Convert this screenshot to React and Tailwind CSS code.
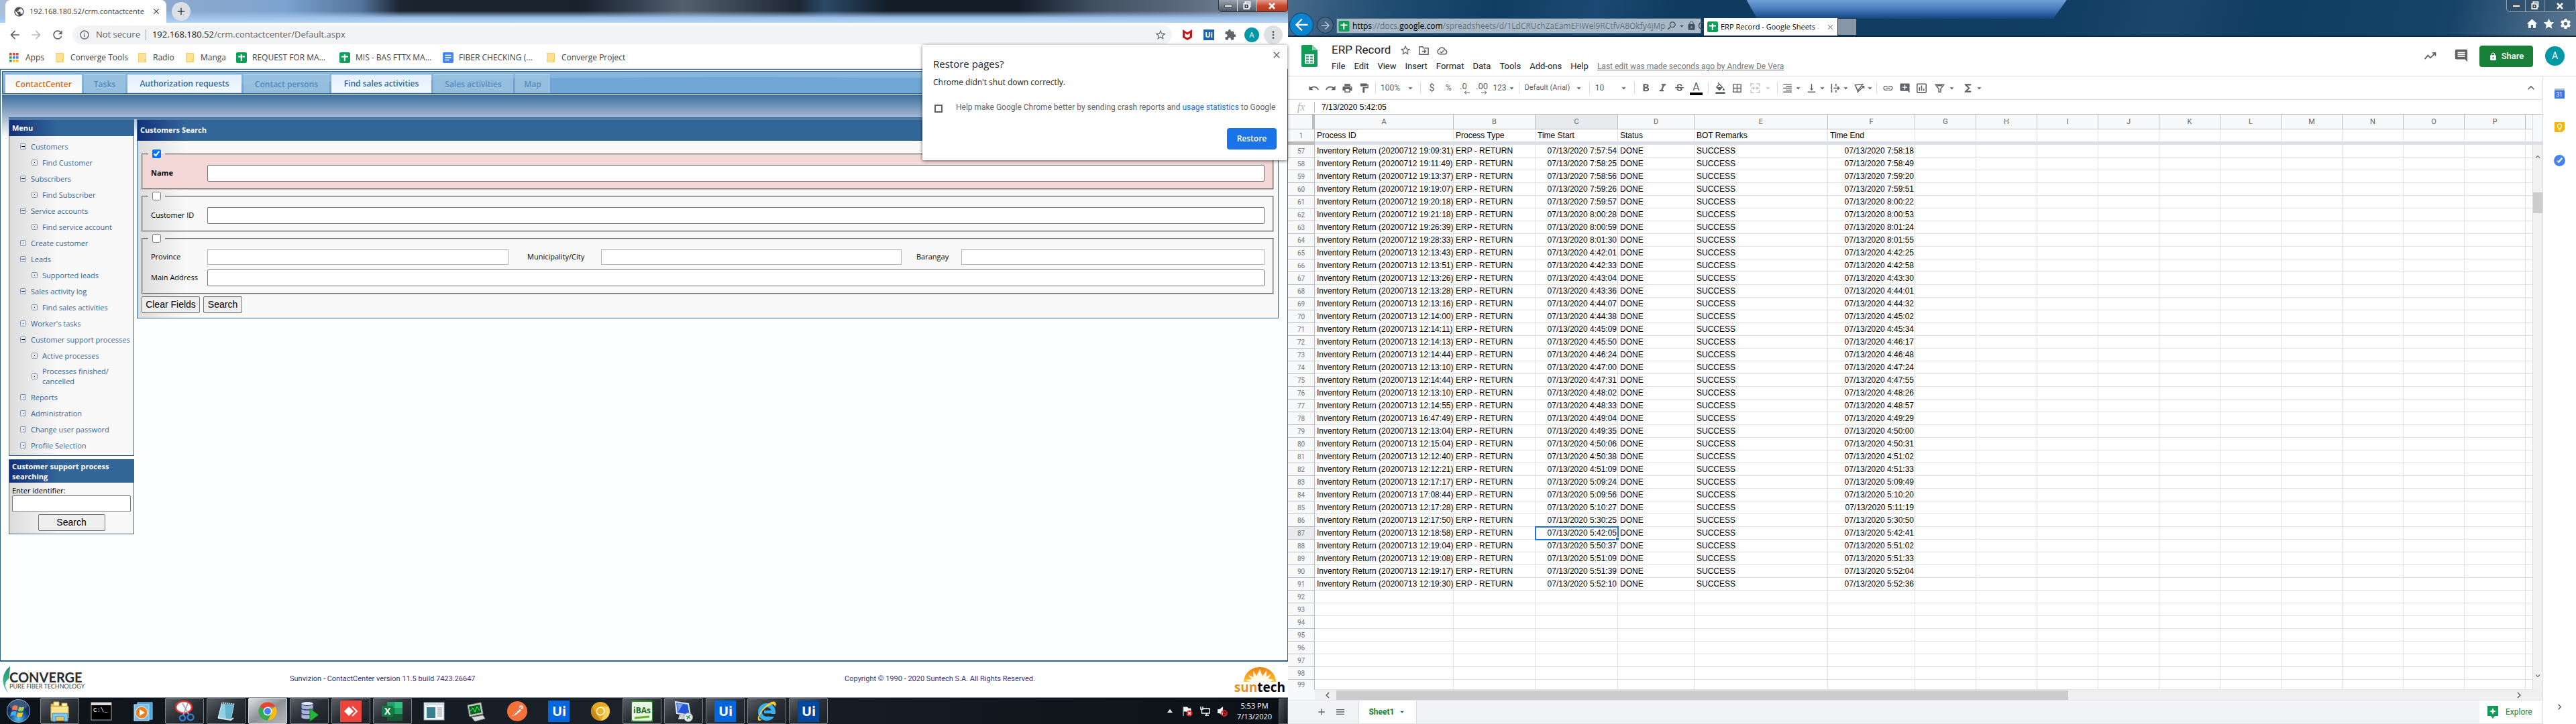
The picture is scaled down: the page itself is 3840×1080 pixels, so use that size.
import React from "react";
import {
  MdArrowBack, MdArrowForward, MdRefresh, MdInfoOutline, MdPublic, MdClose, MdAdd, MdStarBorder, MdMoreVert,
  MdExtension, MdUndo, MdRedo, MdPrint, MdFormatPaint, MdFormatBold, MdFormatItalic, MdStrikethroughS,
  MdFormatColorFill, MdBorderAll, MdFormatAlignRight, MdVerticalAlignBottom, MdLink, MdAddComment,
  MdInsertChartOutlined, MdFunctions, MdArrowDropDown, MdLock, MdSearch, MdHome, MdStar, MdSettings, MdMenu,
  MdComment, MdKeyboardArrowUp, MdKeyboardArrowDown, MdKeyboardArrowLeft, MdKeyboardArrowRight,
} from "react-icons/md";

const cx = (...parts) => parts.filter(Boolean).join(" ");

/* ---------- shared pieces ---------- */

function WindowButtons({ dark }) {
  const base = "flex h-full items-center justify-center";
  return (
    <div
      className={cx(
        "flex h-[18px] w-[104px] shrink-0 overflow-hidden rounded-b-[5px] border border-t-0",
        dark ? "border-[#8fa3b5] bg-[#2c4a66]/60" : "border-[#2b3340] bg-[#7f8b99]"
      )}
    >
      <button aria-label="Minimize" className={cx(base, "w-[28px] border-r", dark ? "border-[#8fa3b5]" : "border-[#d5dbe2] bg-linear-to-b from-[#9aa5b1] to-[#4c5866]")}>
        <span className="h-[4px] w-[12px] border border-[#444] bg-white" />
      </button>
      <button aria-label="Restore window" className={cx(base, "w-[28px] border-r", dark ? "border-[#8fa3b5]" : "border-[#d5dbe2] bg-linear-to-b from-[#9aa5b1] to-[#4c5866]")}>
        <svg viewBox="0 0 14 14" className="h-[13px] w-[14px]">
          <rect x="4" y="1" width="8" height="8" fill="none" stroke="#fff" strokeWidth="1.6" />
          <rect x="2" y="4" width="8" height="8" fill="#445" stroke="#fff" strokeWidth="2" />
          <rect x="5" y="7" width="2" height="2" fill="#fff" />
        </svg>
      </button>
      <button aria-label="Close window" className={cx(base, "flex-1", !dark && "bg-linear-to-b from-[#e29b8c] via-[#c8492f] to-[#b03a20]")}>
        <svg viewBox="0 0 12 10" className="h-[10px] w-[12px]">
          <path d="M2 1l8 8M10 1L2 9" stroke="#fff" strokeWidth="2.6" />
        </svg>
      </button>
    </div>
  );
}

function SheetsMark({ className }) {
  return (
    <svg viewBox="0 0 16 16" className={className}>
      <rect width="16" height="16" rx="2" fill="#0f9d58" />
      <path d="M7.8 3v10M3 6.6h10" stroke="#fff" strokeWidth="2" />
    </svg>
  );
}

function Folder() {
  return (
    <svg viewBox="0 0 12 14" className="h-[14px] w-[12px] shrink-0">
      <path d="M0.5 0.5h11v13h-11z" fill="#fde293" stroke="#f3cd62" />
      <path d="M9 9h3v5H9z" fill="#f7d36b" />
    </svg>
  );
}

/* ---------- Chrome window ---------- */

function ChromeTitleBar() {
  return (
    <div className="flex h-[34px] items-start bg-[linear-gradient(180deg,transparent_0,transparent_48%,#9fc3ea_78%,#b4d3f5_100%),linear-gradient(90deg,#a9bfd9_0,#8ba9cd_14%,#7ea3d0_22%,#52749d_28%,#1b2530_31%,#18212c_45%,#3a4656_50%,#55606e_53%,#1c2733_62%,#2c4a66_64%,#131c27_69%,#141d28_79%,#414f61_85%,#5b6a7d_92%,#8795a8_100%)] pl-[8px]">
      <div className="flex h-[34px] w-[240px] items-center rounded-t-lg bg-white pr-[8px] pl-[12px]">
        <MdPublic className="h-[17px] w-[17px] shrink-0 text-[#4d5156]" />
        <span className="ml-[7px] flex-1 text-[11px] leading-4 whitespace-nowrap text-[#3c4043]">192.168.180.52/crm.contactcente</span>
        <button aria-label="Close tab"><MdClose className="h-[14px] w-[14px] text-[#3c4043]" /></button>
      </div>
      <button aria-label="New tab" className="mt-[3px] ml-[8px] flex h-[28px] w-[28px] items-center justify-center rounded-full bg-[#dbe0e6]">
        <MdAdd className="h-[18px] w-[18px] text-[#3c4043]" />
      </button>
      <div className="flex-1" />
      <WindowButtons />
    </div>
  );
}

function ChromeToolbar() {
  return (
    <div className="flex h-[36px] items-center bg-white pr-[8px] pl-[12px] text-[#5f6368]">
      <button aria-label="Back"><MdArrowBack className="h-[20px] w-[20px]" /></button>
      <button aria-label="Forward" className="ml-[12px]"><MdArrowForward className="h-[20px] w-[20px] text-[#bbbdc0]" /></button>
      <button aria-label="Reload" className="ml-[12px]"><MdRefresh className="h-[20px] w-[20px]" /></button>
      <div className="ml-[12px] flex h-[28px] flex-1 items-center rounded-full bg-[#f1f3f4] pr-[8px] pl-[10px] text-[13px]">
        <MdInfoOutline className="h-[16px] w-[16px]" />
        <span className="ml-[9px]">Not secure</span>
        <span className="ml-[8px] h-[16px] w-px bg-[#9aa0a6]" />
        <span className="ml-[9px] text-[#202124]">192.168.180.52</span>
        <span className="flex-1">/crm.contactcenter/Default.aspx</span>
        <button aria-label="Bookmark this page"><MdStarBorder className="h-[18px] w-[18px]" /></button>
      </div>
      <svg viewBox="0 0 14 16" className="ml-[16px] h-[16px] w-[14px]">
        <path d="M0 0l7 4.5L14 0v12l-7 4-7-4z" fill="#c01818" />
        <path d="M3.3 5.2L7 8l3.7-2.8v5.4L7 12.6l-3.7-2z" fill="#fff" />
      </svg>
      <span className="ml-[17px] flex h-[16px] w-[16px] items-center justify-center bg-[#1f63a8] text-[11px] font-bold text-white">Ui</span>
      <button aria-label="Extensions" className="ml-[15px]"><MdExtension className="h-[18px] w-[18px]" /></button>
      <button aria-label="Profile" className="ml-[12px] flex h-[22px] w-[22px] items-center justify-center rounded-full bg-[#0097a7] text-[11px] text-white">A</button>
      <button aria-label="Chrome menu" className="ml-[7px] flex h-[28px] w-[28px] items-center justify-center rounded-full bg-[#dfe0e1]">
        <MdMoreVert className="h-[18px] w-[18px]" />
      </button>
    </div>
  );
}

function AppsGlyph() {
  const colors = ["#ea4335", "#ea4335", "#ea4335", "#34a853", "#4285f4", "#4285f4", "#34a853", "#fbbc04", "#fbbc04"];
  return (
    <svg viewBox="0 0 14 14" className="h-[14px] w-[14px] shrink-0">
      {colors.map((c, i) => <rect key={i} x={(i % 3) * 5} y={Math.floor(i / 3) * 5} width="3.6" height="3.6" fill={c} />)}
    </svg>
  );
}

function DocsMark() {
  return (
    <svg viewBox="0 0 16 16" className="h-[16px] w-[16px] shrink-0">
      <rect width="16" height="16" rx="2" fill="#4285f4" />
      <path d="M3.5 4.5h9M3.5 8h9M3.5 11.5h6" stroke="#fff" strokeWidth="1.6" />
    </svg>
  );
}

const bookmarks = [
  ["Apps", "apps", "w-[69px]"],
  ["Converge Tools", "folder", "w-[123px]"],
  ["Radio", "folder", "w-[71px]"],
  ["Manga", "folder", "w-[75px]"],
  ["REQUEST FOR MA...", "sheet", "w-[154px]"],
  ["MIS - BAS FTTX MA...", "sheet", "w-[154px]"],
  ["FIBER CHECKING (...", "doc", "w-[155px]"],
  ["Converge Project", "folder", "w-[140px]"],
];

function BookmarksBar() {
  return (
    <nav className="flex h-[33px] items-center border-b border-[#dadce0] bg-white pl-[14px] text-[12px] text-[#3c4043]">
      {bookmarks.map(([label, kind, w]) => (
        <a key={label} href="#bookmark" className={cx("flex shrink-0 items-center whitespace-nowrap", kind === "sheet" || kind === "doc" ? "gap-[8px]" : "gap-[10px]", w)}>
          {kind === "apps" && <AppsGlyph />}
          {kind === "folder" && <Folder />}
          {kind === "sheet" && <SheetsMark className="h-[16px] w-[16px] shrink-0" />}
          {kind === "doc" && <DocsMark />}
          {label}
        </a>
      ))}
    </nav>
  );
}

function RestorePopup() {
  return (
    <div role="dialog" aria-label="Restore pages?" className="absolute top-[67px] right-px z-10 flex h-[172px] w-[544px] flex-col rounded-xs bg-white px-[16px] shadow-[0_1px_5px_rgba(0,0,0,0.6)]">
      <div className="flex h-[40px] items-start justify-between pt-[18px] text-[15px] leading-5 text-[#202124]">
        Restore pages?
        <button aria-label="Close" className="-mt-[11px] -mr-[8px]"><MdClose className="h-[16px] w-[16px] text-[#5f6368]" /></button>
      </div>
      <p className="mt-[8px] text-[12px] leading-4 text-[#202124]">Chrome didn't shut down correctly.</p>
      <label className="mt-[21px] flex items-center font-[Roboto] text-[12px] leading-4 whitespace-nowrap text-[#5f6368]">
        <input type="checkbox" className="mt-[4px] mr-[20px] ml-[2px] h-[12px] w-[12px] shrink-0 appearance-none border-2 border-[#5f6368] bg-white" />
        <span>Help make Google Chrome better by sending crash reports and <a href="#stats" className="text-[#1a73e8]">usage statistics</a> to Google</span>
      </label>
      <button className="mt-[23px] h-[32px] w-[74px] shrink-0 self-end rounded bg-[#1a73e8] text-[12px] font-semibold text-white">Restore</button>
    </div>
  );
}

/* ---------- ContactCenter page ---------- */

const tabs = [
  ["ContactCenter", "active", "w-[114px]"],
  ["Tasks", "off", "w-[62px]"],
  ["Authorization requests", "on", "w-[170px]"],
  ["Contact persons", "off", "w-[128px]"],
  ["Find sales activities", "on", "w-[149px]"],
  ["Sales activities", "off", "w-[119px]"],
  ["Map", "off", "w-[52px]"],
];

const tabLook = {
  active: "bg-linear-to-b from-[#f0f5fa] to-white text-[#d96a10]",
  on: "bg-linear-to-b from-[#e3effb] to-[#f1f8ff] text-[#2f6799] border-b-2 border-b-[#dbe8f4]",
  off: "bg-[#9dc3e0]/80 text-[#558ebd]",
};

const menu = [
  ["Customers", 0, 1], ["Find Customer", 1], ["Subscribers", 0, 1], ["Find Subscriber", 1], ["Service accounts", 0, 1],
  ["Find service account", 1], ["Create customer", 0], ["Leads", 0, 1], ["Supported leads", 1], ["Sales activity log", 0, 1],
  ["Find sales activities", 1], ["Worker's tasks", 0], ["Customer support processes", 0, 1], ["Active processes", 1],
  ["Processes finished/ cancelled", 1], ["Reports", 0], ["Administration", 0], ["Change user password", 0], ["Profile Selection", 0],
];

function Node({ open }) {
  return (
    <svg viewBox="0 0 9 9" className="h-[9px] w-[9px] shrink-0">
      <rect x="0.5" y="0.5" width="8" height="8" rx="1" fill="#e4eaf0" stroke="#7f95ab" />
      {open ? <path d="M2 4.5h5" stroke="#000" /> : <rect x="4" y="4" width="1" height="1" fill="#000" />}
    </svg>
  );
}

const headerFill = "bg-[linear-gradient(90deg,#12307a_0,#336699_72px)] bg-[#336699] font-bold text-white";
const bodyFill = "bg-[linear-gradient(90deg,#dcdcdc_0,#f9f9f9_72px)]";
const textBox = "rounded-xs border border-[#767676] bg-white";

function SideMenu() {
  return (
    <aside className="flex w-[187px] shrink-0 flex-col gap-[5px] text-[11px]">
      <section className={cx("border border-[#336699]", bodyFill)}>
        <h2 className={cx("flex h-[24px] items-center px-[4px]", headerFill)}>Menu</h2>
        <ul className="pt-[3px] pb-[3px] leading-[15px] text-[#336699]">
          {menu.map(([label, depth, open]) => (
            <li key={label} className={cx("flex items-center gap-[7px]", depth ? "pl-[33px]" : "pl-[16px]", label.length === 29 ? "h-[38px]" : "h-[24px]")}>
              <Node open={open} />
              <a href="#menu" className={label.length === 29 ? "w-[110px]" : "whitespace-nowrap"}>{label}</a>
            </li>
          ))}
        </ul>
      </section>
      <section className={cx("border border-[#336699]", bodyFill)}>
        <h2 className={cx("px-[4px] py-[2px] leading-[15px]", headerFill)}>Customer support process searching</h2>
        <div className="flex flex-col items-center px-[4px] pt-[4px] pb-[4px]">
          <label htmlFor="ident" className="self-start leading-[15px] text-black">Enter identifier:</label>
          <input id="ident" className={cx("h-[25px] w-full", textBox)} />
          <button className="mt-[3px] h-[25px] w-[100px] rounded-xs border border-[#767676] bg-[#efefef] font-[Liberation_Sans] text-[14px] text-black">Search</button>
        </div>
      </section>
    </aside>
  );
}

const fieldset = "min-w-0 border-2 border-[#c0c0c0] [border-style:groove] px-[12px] py-[10px]";
const legend = "ml-[-4px] flex px-[6px]";

function Field({ id, label, bold, light, labelWidth = "w-[84px]" }) {
  return (
    <div className="flex min-w-0 flex-1 items-center">
      <label htmlFor={id} className={cx("shrink-0", bold && "font-bold", labelWidth)}>{label}</label>
      <input id={id} className={cx("min-w-0 flex-1", light ? "h-[23px] border border-[#b5b5b5] bg-white" : cx("h-[25px]", textBox))} />
    </div>
  );
}

function SearchForm() {
  return (
    <section className={cx("min-w-0 flex-1 self-start border border-[#336699] text-[11px] text-black", bodyFill)}>
      <h2 className={cx("flex h-[31px] items-center px-[4px]", headerFill)}>Customers Search</h2>
      <form className="flex flex-col gap-[3px] px-[6px] pt-[13px] pb-[7px]" onSubmit={(e) => e.preventDefault()}>
        <fieldset className={cx(fieldset, "bg-[#f4d7d7]")}>
          <legend className={legend}><input type="checkbox" defaultChecked aria-label="Search by name" className="h-[13px] w-[13px]" /></legend>
          <Field id="name" label="Name" bold />
        </fieldset>
        <fieldset className={fieldset}>
          <legend className={legend}><input type="checkbox" aria-label="Search by customer ID" className="h-[13px] w-[13px]" /></legend>
          <Field id="cid" label="Customer ID" />
        </fieldset>
        <fieldset className={fieldset}>
          <legend className={legend}><input type="checkbox" aria-label="Search by address" className="h-[13px] w-[13px]" /></legend>
          <div className="flex flex-col gap-[7px]">
            <div className="flex gap-[28px]">
              <div className="flex w-[533px]"><Field id="prov" label="Province" light /></div>
              <div className="flex w-[558px]"><Field id="mun" label="Municipality/City" light labelWidth="w-[110px]" /></div>
              <div className="-ml-[6px] flex flex-1"><Field id="bar" label="Barangay" light labelWidth="w-[67px]" /></div>
            </div>
            <Field id="addr" label="Main Address" />
          </div>
        </fieldset>
        <div className="flex gap-[5px] font-[Liberation_Sans] text-[14px]">
          <button className="h-[25px] w-[87px] rounded-xs border border-[#767676] bg-[#efefef]">Clear Fields</button>
          <button className="h-[25px] w-[58px] rounded-xs border border-[#767676] bg-[#efefef]">Search</button>
        </div>
      </form>
    </section>
  );
}

function ContactCenter() {
  return (
    <main className="flex flex-1 flex-col border border-b-2 border-[#2f6496] bg-[#fdfffe] px-[2px] pt-[2px]">
      <nav className="flex h-[34px] items-end gap-[3px] border-y border-l border-[#2f6496] bg-[radial-gradient(ellipse_900px_24px_at_1100px_32px,#6fa6d5_0,#6fa6d5_98%,transparent_100%),linear-gradient(180deg,#8bb8dc,#78add8)] pl-[4px] text-[12px] font-semibold">
        {tabs.map(([label, look, w]) => (
          <button key={label} className={cx("h-[28px] shrink-0 border-t border-[#c5dcef] whitespace-nowrap", tabLook[look], w)}>{label}</button>
        ))}
      </nav>
      <div className="mt-px flex-1 bg-[linear-gradient(180deg,#3c6e9f_0,#a5b9d2_34px,#fdfffe_64px)] bg-no-repeat pr-[11px] pl-[10px]">
        <div className="h-[36px] border-b-2 border-[#2f6496]" />
        <div className="flex gap-[4px] pt-[1px]">
          <SideMenu />
          <SearchForm />
        </div>
      </div>
    </main>
  );
}

function SiteFooter() {
  return (
    <footer className="flex h-[53px] items-center bg-white font-[Roboto] text-[11px] text-[#3a2f7d]">
      <div className="flex w-[432px] items-center">
        <svg viewBox="0 0 16 48" className="ml-[2px] h-[46px] w-[14px]">
          <defs>
            <linearGradient id="leaf" x1="0" y1="0" x2="0" y2="1"><stop offset="0" stopColor="#1e8f72" /><stop offset="1" stopColor="#4cd0a4" /></linearGradient>
          </defs>
          <path d="M15 1C5 8-5 27 12 47 5 35 5 28 13 22z" fill="url(#leaf)" />
        </svg>
        <div className="-ml-[2px] pt-[3px] font-[Lato] text-[#2b2b2b]">
          <div className="text-[20px] leading-[18px] font-bold">CONVERGE</div>
          <div className="text-[9px] leading-[10px] text-[#444]">PURE FIBER TECHNOLOGY</div>
        </div>
      </div>
      <span>Sunvizion - ContactCenter version 11.5 build 7423.26647</span>
      <span className="mr-[297px] ml-auto">Copyright © 1990 - 2020 Suntech S.A. All Rights Reserved.</span>
      <div className="mr-[4px] flex flex-col items-center">
        <svg viewBox="0 0 52 24" className="h-[23px] w-[52px]">
          <defs>
            <linearGradient id="sun" x1="0" y1="0" x2="0" y2="1"><stop offset="0" stopColor="#f07d10" /><stop offset="1" stopColor="#fcc32d" /></linearGradient>
          </defs>
          <path d="M1 24a25 23 0 0 1 50 0z" fill="url(#sun)" />
          <path d="M10 24l-6-3 9-1-5-7 8 4 0-10 5 8 5-11 4 11 7-9-1 10 8-4-5 7 9 2-6 3z" fill="#fff" opacity="0.9" />
        </svg>
        <span className="font-[Open_Sans] text-[19px] leading-[17px] font-bold text-black"><span className="text-[#f08c1c]">sun</span>tech</span>
      </div>
    </footer>
  );
}

/* ---------- Windows taskbar ---------- */

const art = {
  explorer: (
    <>
      <path d="M3 5h10l2 3h13v22H3z" fill="#e9c860" stroke="#b99530" />
      <path d="M7 2h8v6H7zM19 4h8v5h-8z" fill="#fff4c0" stroke="#d9a83a" />
      <path d="M3 9h26v17H3z" fill="#fbe592" stroke="#d4ae45" />
      <path d="M5 19h23v12h-5v-7H10v7H5z" fill="#7cc4ea" stroke="#3f8fc0" />
    </>
  ),
  cmd: (
    <>
      <rect x="1" y="3" width="30" height="26" fill="#000" stroke="#aaa" />
      <rect x="1" y="3" width="30" height="4" fill="#ddd" />
      <text x="4" y="17" fontSize="9" fill="#fff" fontFamily="Liberation Mono">C:\_</text>
    </>
  ),
  media: (
    <>
      <rect x="8" y="3" width="22" height="25" fill="#4aa3da" stroke="#9cd2f4" />
      <rect x="3" y="6" width="22" height="24" fill="#77bce6" stroke="#c2e4f8" />
      <circle cx="14" cy="18" r="9" fill="#ef7d1a" stroke="#fff" />
      <path d="M11 13v10l8-5z" fill="#fff" />
    </>
  ),
  snip: (
    <>
      <ellipse cx="15" cy="10" rx="12" ry="9" fill="#fff" stroke="#d33" strokeWidth="2.5" />
      <path d="M13 4l10 18M21 4l-7 18" stroke="#aab" strokeWidth="2" />
      <circle cx="25" cy="25" r="4.5" fill="none" stroke="#2f7fd0" strokeWidth="2.5" />
      <circle cx="13" cy="26" r="4" fill="none" stroke="#2f7fd0" strokeWidth="2.5" />
    </>
  ),
  notepad: (
    <>
      <path d="M10 3l18 2-5 24-19-3z" fill="#8fd0e6" stroke="#e9f6fa" />
      <path d="M14 5l14 1-5 23-7-1z" fill="#4d9fbc" opacity=".6" />
      <path d="M4 26l19 3 4-3" stroke="#d6e8ee" strokeWidth="2" fill="none" />
      <path d="M10 4l18 1" stroke="#555" strokeWidth="2" strokeDasharray="1.5 1.5" />
    </>
  ),
  chrome: (
    <>
      <path d="M16 16L4.3 9.2A13.5 13.5 0 0 1 27.7 9.2H16z" fill="#ea4335" />
      <path d="M16 16L27.7 9.2A13.5 13.5 0 0 1 16 29.5l5.5-10z" fill="#fbbc04" />
      <path d="M16 16l-11.7-6.8A13.5 13.5 0 0 0 16 29.5l5.5-10z" fill="#34a853" />
      <circle cx="16" cy="16" r="6.5" fill="#fff" />
      <circle cx="16" cy="16" r="5" fill="#4285f4" />
    </>
  ),
  db: (
    <>
      <path d="M4 4v21c0 4 18 4 18 0V4z" fill="#aab4d8" stroke="#333b66" />
      <ellipse cx="13" cy="4.5" rx="9" ry="3" fill="#e5e9fa" stroke="#333b66" />
      <path d="M4 11c0 4 18 4 18 0M4 18c0 4 18 4 18 0" stroke="#333b66" strokeWidth="1.5" fill="none" />
      <path d="M17 12l13 9.5L17 31z" fill="#27b43a" stroke="#0a7a1a" />
    </>
  ),
  anydesk: (
    <>
      <rect width="32" height="32" fill="#ef443b" />
      <path d="M13 9l7 7-7 7-7-7z" fill="#fff" />
      <path d="M18 9l7 7-7 7" fill="none" stroke="#fff" strokeWidth="2" />
    </>
  ),
  excel: (
    <>
      <rect x="8" y="2" width="23" height="28" rx="1" fill="#21a366" />
      <path d="M19.500 2H31v9H19.500z" fill="#33c481" />
      <path d="M8 11h11.500v9H8z" fill="#107c41" />
      <path d="M8 20h23v10H8z" fill="#185c37" />
      <rect x="0" y="8" width="17" height="16" rx="1" fill="#107c41" />
      <text x="4" y="21" fontSize="14" fontWeight="700" fill="#fff" fontFamily="Open Sans">X</text>
    </>
  ),
  window: (
    <>
      <rect x="1" y="3" width="30" height="26" fill="#f5f7f8" stroke="#8aa" />
      <rect x="1" y="3" width="30" height="4" fill="#d3dde4" />
      <rect x="5" y="10" width="13" height="16" fill="#3a7f90" />
      <path d="M21 11h7M21 14h7M21 17h7M21 20h7M21 23h7" stroke="#889" />
    </>
  ),
  monitor: (
    <>
      <path d="M4 7l20-4 3 17-20 4z" fill="#ccc" stroke="#888" />
      <path d="M6 9l16-3 2.500 12-16 3z" fill="#062" />
      <path d="M8 16l4-5 3 6 3-8 4 6" stroke="#5f5" fill="none" />
      <path d="M10 25l17-3 3 5-15 4z" fill="#ddd" stroke="#888" />
    </>
  ),
  postman: (
    <>
      <circle cx="16" cy="16" r="15" fill="#f4713b" />
      <path d="M8 23l11-11 3 3-9 7z" fill="#fff" opacity=".9" />
      <circle cx="22" cy="10" r="3" fill="#ffd9c8" />
      <path d="M10 22l12-12" stroke="#a33f17" />
    </>
  ),
  canary: (
    <>
      <circle cx="16" cy="16" r="14" fill="#e5a91d" />
      <path d="M16 9h12A14 14 0 0 1 17 30l5-11z" fill="#f8d35a" />
      <path d="M4 9l6 11 6 10A14 14 0 0 1 4 9z" fill="#c98a14" />
      <circle cx="16" cy="16" r="6.500" fill="#fff" />
      <circle cx="16" cy="16" r="5" fill="#eeb429" />
    </>
  ),
  ibas: (
    <>
      <rect x="0" y="1" width="32" height="30" rx="3" fill="#e9f5e4" stroke="#2f8a2f" strokeWidth="2" />
      <text x="3" y="19" fontSize="12" fontWeight="700" fill="#1c6b23" fontFamily="Open Sans">iBAs</text>
      <path d="M5 26l22-2" stroke="#63b32e" strokeWidth="3" />
    </>
  ),
  remote: (
    <>
      <path d="M4 2l19 3 3 17-20-3z" fill="#2453d8" stroke="#dfe6f5" strokeWidth="2" />
      <path d="M6 4l9 1-7 12z" fill="#7ba1f5" />
      <path d="M10 21l9 1 2 6H8z" fill="#cfd4da" />
      <circle cx="23" cy="25" r="6.500" fill="#e8ecef" stroke="#99a" />
      <path d="M20 23l3 2-2 3M26 22l-3 2 3 3" stroke="#2a9c3a" fill="none" strokeWidth="1.500" />
    </>
  ),
  ie: (
    <>
      <circle cx="16" cy="17" r="10" fill="none" stroke="#35b2ef" strokeWidth="6" />
      <path d="M12 17h17" stroke="#35b2ef" strokeWidth="4.500" />
      <path d="M21 20h10v4H19z" fill="#20262d" />
      <path d="M4 30C-3 24 22-5 29 3c2 2 0 5-1 7 0-4-2-5-5-4C14 9 4 20 5 26c0 2 2 3 4 2-2 2-4 2.500-5 2z" fill="#f7cb35" />
    </>
  ),
  uiBright: (
    <>
      <rect width="32" height="32" fill="#0067df" />
      <text x="6" y="23" fontSize="20" fontWeight="700" fill="#fff" fontFamily="Open Sans">Ui</text>
    </>
  ),
  uiDark: (
    <>
      <rect width="32" height="32" fill="#00489d" />
      <text x="6" y="23" fontSize="20" fontWeight="700" fill="#fff" fontFamily="Open Sans">Ui</text>
    </>
  ),
};

const taskItems = [
  ["explorer", 1], ["cmd"], ["media"], ["snip", 1], ["notepad", 1], ["chrome", 2], ["db", 1], ["anydesk", 1], ["excel", 1],
  ["window"], ["monitor"], ["postman"], ["uiBright"], ["canary"], ["ibas", 1], ["remote", 1], ["uiBright", 1], ["ie", 1], ["uiDark", 1],
];

function Taskbar() {
  return (
    <div className="flex h-[40px] items-stretch border-t border-[#8a94a0] bg-linear-to-r from-[#0c1218] via-[#1b222a] to-[#0b1016]">
      <button aria-label="Start" className="ml-[8px] flex w-[38px] items-center justify-center">
        <svg viewBox="0 0 38 38" className="h-[37px] w-[37px]">
          <defs><radialGradient id="orb" cx=".5" cy=".85"><stop offset="0" stopColor="#57c8f2" /><stop offset=".6" stopColor="#1f62a2" /><stop offset="1" stopColor="#0d2f5c" /></radialGradient></defs>
          <circle cx="19" cy="19" r="17.500" fill="url(#orb)" stroke="#8fb6d4" />
          <path d="M10 12c3-2 6-2 8 0l-1.500 6.500c-2-1.500-5-1.500-8 0z" fill="#f05a28" />
          <path d="M20 12.500c3 1.500 5 1.500 8 0L26.500 19c-3 1.500-5 1.500-8 0z" fill="#8cc63e" />
          <path d="M8 20.500c3-1.500 6-1.500 8 0L14.500 27c-2-1.500-5-1.500-8 0z" fill="#4aa9e9" />
          <path d="M18 21c3 1.500 5 1.500 8 0l-1.500 6.500c-3 1.500-5 1.500-8 0z" fill="#fcc52c" />
          <ellipse cx="19" cy="10" rx="14" ry="8" fill="#fff" opacity=".2" />
        </svg>
      </button>
      <div className="ml-[14px] flex gap-[4px]">
        {taskItems.map(([name, state], i) => (
          <button
            key={i}
            aria-label={name}
            className={cx(
              "flex w-[58px] items-center justify-center",
              state === 1 && "rounded-xs border border-[#7b8187] bg-linear-to-br from-[#5a5f65] via-[#2a2f35] to-[#1c2127]",
              state === 2 && "rounded-xs border border-[#d6d8da] bg-linear-to-br from-[#e0e1e3] via-[#8e9296] to-[#b6b9bc]"
            )}
          >
            <svg viewBox="0 0 32 32" className="h-[32px] w-[32px]">{art[name]}</svg>
          </button>
        ))}
      </div>
      <div className="ml-auto flex items-center gap-[10px] text-white">
        <svg viewBox="0 0 8 5" className="mr-[4px] h-[5px] w-[8px]"><path d="M0 5l4-5 4 5z" fill="#fff" /></svg>
        <svg viewBox="0 0 16 16" className="h-[16px] w-[16px]">
          <path d="M2 1v14M3 2h5l1 2h4v6H8L7 8H3z" fill="#fff" stroke="#fff" />
          <circle cx="11" cy="11" r="4.500" fill="#d22" /><path d="M9 9l4 4M13 9l-4 4" stroke="#fff" strokeWidth="1.300" />
        </svg>
        <svg viewBox="0 0 16 16" className="h-[16px] w-[16px]">
          <path d="M5 4h10v7H6M8 14h6M10.500 11v3M2 1v4h3V1M3.500 5v6H6" fill="none" stroke="#fff" strokeWidth="1.400" />
        </svg>
        <svg viewBox="0 0 16 16" className="h-[16px] w-[16px]">
          <path d="M1 5h3l5-4v14l-5-4H1z" fill="#fff" />
          <circle cx="11" cy="11" r="4" fill="none" stroke="#d22" strokeWidth="1.800" /><path d="M8 8l6 6" stroke="#d22" strokeWidth="1.800" />
        </svg>
        <div className="w-[60px] text-center text-[11px] leading-4">
          <div>5:53 PM</div>
          <div>7/13/2020</div>
        </div>
        <button aria-label="Show desktop" className="-ml-[4px] h-[38px] w-[14px] border border-[#555c64] bg-linear-to-br from-[#4c5259] to-[#15191e]" />
      </div>
    </div>
  );
}

/* ---------- Internet Explorer window with the spreadsheet ---------- */

function IeBar() {
  return (
    <div className="relative flex h-[55px] shrink-0 overflow-hidden border-b-2 border-[#0c2a47] bg-[linear-gradient(105deg,#4a6c8b_0,#31597d_4%,#1c4a70_9%,#0f3d63_16%,#1a4a73_24%,#0f3b60_30%,#103d63_60%,#1b476e_68%,#0f3c62_76%,#16436a_90%,#5c7890_100%)]">
      <div className="absolute top-[-6px] left-[680px] h-[34px] w-[485px] bg-linear-to-b from-[#82aee0] via-[#4f86c6] to-[#164585] blur-[3px] [clip-path:polygon(0_0,100%_0,95%_100%,4%_100%)]" />
      <div className="relative flex w-full items-end">
        <div className="flex h-full w-[72px] shrink-0 items-end gap-[5px] overflow-hidden pl-[2px]">
          <button aria-label="Back" className="-mb-[2px] flex h-[36px] w-[36px] shrink-0 items-center justify-center rounded-full border border-[#0b3c63] bg-[#0a84cf]">
            <MdArrowBack className="h-[28px] w-[28px] text-white" />
          </button>
          <button aria-label="Forward" className="mb-[3px] flex h-[25px] w-[25px] shrink-0 items-center justify-center rounded-full border border-[#143252] bg-[#476683]">
            <MdArrowForward className="h-[18px] w-[18px] text-[#b9c8d6]" />
          </button>
        </div>
        <div className="mb-[3px] flex h-[23px] w-[544px] shrink-0 items-center border border-[#4d6b86] bg-[#a9b9c8] pr-[3px] pl-[2px] text-[12px] text-[#66737f]">
          <SheetsMark className="h-[16px] w-[17px] shrink-0" />
          <span className="ml-[4px] flex-1 whitespace-nowrap"><span className="text-black">https</span>://docs.<span className="text-black">google.com</span>/spreadsheets/d/1LdCRUchZaEamEFiWel9RCtfvA8Okfy4jMp</span>
          <MdSearch className="h-[17px] w-[17px] shrink-0 -scale-x-100 text-[#44505c]" />
          <MdArrowDropDown className="h-[14px] w-[14px] shrink-0 text-[#44505c]" />
          <MdLock className="h-[15px] w-[15px] shrink-0 text-[#44505c]" />
          <MdRefresh className="h-[17px] w-[17px] shrink-0 text-[#44505c]" />
        </div>
        <div className="ml-[4px] flex h-[26px] w-[199px] items-center bg-white pr-[4px] pl-[5px] text-[11px] text-black">
          <SheetsMark className="h-[16px] w-[16px] shrink-0" />
          <span className="ml-[4px] flex-1 whitespace-nowrap">ERP Record - Google Sheets</span>
          <button aria-label="Close tab"><MdClose className="h-[13px] w-[13px] text-[#8a8a8a]" /></button>
        </div>
        <button aria-label="New tab" className="h-[26px] w-[29px] border border-[#1a3a57] bg-[#8696a5]" />
        <div className="flex-1" />
        <div className="flex h-full flex-col items-end">
          <WindowButtons dark />
          <div className="flex flex-1 items-center gap-[6px] pr-[6px] text-white">
            <button aria-label="Home"><MdHome className="h-[19px] w-[19px]" /></button>
            <button aria-label="Favorites"><MdStar className="h-[19px] w-[19px]" /></button>
            <button aria-label="Tools"><MdSettings className="h-[19px] w-[19px]" /></button>
          </div>
        </div>
      </div>
    </div>
  );
}

function SheetsHeader() {
  return (
    <header className="flex h-[58px] shrink-0 items-start bg-white pl-[20px] font-[Roboto]">
      <svg viewBox="0 0 24 33" className="mt-[12px] h-[33px] w-[24px]">
        <path d="M2 0h14l8 8v23a2 2 0 0 1-2 2H2a2 2 0 0 1-2-2V2a2 2 0 0 1 2-2z" fill="#0f9d58" />
        <path d="M16 0l8 8h-8z" fill="#87ceac" />
        <path d="M5 14h14v14H5z" fill="#fff" />
        <path d="M7 16.500h4v2H7zM13 16.500h4v2h-4zM7 20.500h4v2H7zM13 20.500h4v2h-4zM7 24.500h4v2H7zM13 24.500h4v2h-4z" fill="#0f9d58" />
      </svg>
      <div className="ml-[21px] flex-1 pt-[8px]">
        <div className="flex h-[24px] items-center text-[17px] text-[#202124]">
          <h1 className="w-[101px]">ERP Record</h1>
          <div className="flex gap-[10px] text-[#5f6368]">
            <button aria-label="Star"><MdStarBorder className="h-[18px] w-[18px]" /></button>
            <button aria-label="Move">
              <svg viewBox="0 0 18 18" className="h-[17px] w-[17px]" fill="none" stroke="currentColor" strokeWidth="1.600"><path d="M2 15V3h5l1.500 2H16v10zM6 10h6M9.500 7.500L12 10l-2.500 2.500" /></svg>
            </button>
            <button aria-label="Document status">
              <svg viewBox="0 0 18 18" className="h-[17px] w-[17px]" fill="none" stroke="currentColor" strokeWidth="1.500"><path d="M5 14.500a4 4 0 0 1-.5-7.500 5 5 0 0 1 9.300 1 3.300 3.300 0 0 1 .2 6.500zM6 10.500l2.300 2 3.700-4" /></svg>
            </button>
          </div>
        </div>
        <nav className="mt-[4px] flex gap-[13px] text-[13px] leading-4 text-[#202124]">
          {["File", "Edit", "View", "Insert", "Format", "Data", "Tools", "Add-ons", "Help"].map((m) => <button key={m}>{m}</button>)}
          <a href="#history" className="text-[12px] text-[#777] underline">Last edit was made seconds ago by Andrew De Vera</a>
        </nav>
      </div>
      <svg viewBox="0 0 20 14" className="mt-[22px] h-[13px] w-[20px]" fill="none" stroke="#5f6368" strokeWidth="2"><path d="M1 12l5-6 4 4 8-8M13 2h5v5" /></svg>
      <MdComment className="mt-[17px] ml-[25px] h-[22px] w-[22px] text-[#5f6368]" />
      <button className="mt-[13px] ml-[16px] flex h-[32px] w-[80px] items-center justify-center gap-[6px] rounded bg-[#188038] text-[13px] font-medium text-white">
        <MdLock className="h-[13px] w-[13px]" />Share
      </button>
      <button aria-label="Account" className="mt-[14px] mr-[17px] ml-[18px] flex h-[29px] w-[29px] items-center justify-center rounded-full bg-[#0097a7] text-[14px] text-white">A</button>
    </header>
  );
}

const Sep = () => <span className="h-[18px] w-px shrink-0 bg-[#dadce0]" />;
const Caret = ({ pale }) => <MdArrowDropDown className={cx("h-[15px] w-[15px] shrink-0", pale && "text-[#c4c6c9]")} />;
const Tool = ({ label, w = "w-[25px]", children }) => (
  <button aria-label={label} className={cx("flex shrink-0 items-center justify-center whitespace-nowrap", w)}>{children}</button>
);

function SheetsToolbar() {
  const ic = "h-[17px] w-[17px]";
  return (
    <div className="flex h-[36px] shrink-0 items-center border-y border-[#dadce0] bg-white pl-[26px] font-[Roboto] text-[12px] text-[#5f6368]">
      <Tool label="Undo"><MdUndo className={ic} /></Tool>
      <Tool label="Redo"><MdRedo className={ic} /></Tool>
      <Tool label="Print"><MdPrint className={ic} /></Tool>
      <Tool label="Paint format"><MdFormatPaint className={ic} /></Tool>
      <span className="w-[4px]" /><Sep />
      <Tool label="Zoom" w="w-[66px]"><span className="mr-[8px]">100%</span><Caret /></Tool><Sep />
      <span className="w-[4px]" />
      <Tool label="Format as currency"><span className="text-[14px]">$</span></Tool>
      <Tool label="Format as percent"><span>%</span></Tool>
      <Tool label="Decrease decimal places">
        <svg viewBox="0 0 18 20" className="h-[20px] w-[18px]"><text x="0" y="12" fontSize="13" fontFamily="Roboto" fill="currentColor">.0</text><path d="M15 17H7M10 14.500L7 17l3 2.500" stroke="currentColor" fill="none" /></svg>
      </Tool>
      <Tool label="Increase decimal places">
        <svg viewBox="0 0 20 20" className="h-[20px] w-[20px]"><text x="0" y="12" fontSize="13" fontFamily="Roboto" fill="currentColor">.00</text><path d="M8 17h8M13 14.500l3 2.500-3 2.500" stroke="currentColor" fill="none" /></svg>
      </Tool>
      <Tool label="More formats" w="w-[42px]"><span>123</span><Caret /></Tool><Sep />
      <Tool label="Font" w="w-[104px]"><span className="mr-[6px] text-[11px]">Default (Arial)</span><Caret /></Tool><Sep />
      <Tool label="Font size" w="w-[66px]"><span className="mr-[22px]">10</span><Caret /></Tool><Sep />
      <span className="w-[4px]" />
      <Tool label="Bold"><MdFormatBold className="h-[19px] w-[19px]" /></Tool>
      <Tool label="Italic"><MdFormatItalic className="h-[19px] w-[19px]" /></Tool>
      <Tool label="Strikethrough"><MdStrikethroughS className={ic} /></Tool>
      <Tool label="Text color"><span className="border-b-4 border-black px-[4px] text-[16px] leading-[17px]">A</span></Tool>
      <span className="w-[5px]" /><Sep /><span className="w-[5px]" />
      <Tool label="Fill color"><MdFormatColorFill className={ic} /></Tool>
      <Tool label="Borders"><MdBorderAll className={ic} /></Tool>
      <Tool label="Merge cells" w="w-[47px]">
        <svg viewBox="0 0 16 16" className="mr-[4px] h-[15px] w-[15px] text-[#c4c6c9]" fill="none" stroke="currentColor" strokeWidth="1.700"><path d="M1 5V1h5M10 1h5v4M1 11v4h5M10 15h5v-4M1 8h5M10 8h5M4.500 6L6.500 8l-2 2M11.500 6l-2 2 2 2" /></svg>
        <Caret pale />
      </Tool><Sep /><span className="w-[4px]" />
      <Tool label="Horizontal align" w="w-[36px]"><MdFormatAlignRight className={ic} /><Caret /></Tool>
      <Tool label="Vertical align" w="w-[36px]"><MdVerticalAlignBottom className={ic} /><Caret /></Tool>
      <Tool label="Text wrapping" w="w-[35px]">
        <svg viewBox="0 0 16 16" className="h-[15px] w-[16px]" fill="none" stroke="currentColor" strokeWidth="1.700"><path d="M2 1v14M9 1v4M9 11v4M5 8h9M11.500 5.500L14 8l-2.500 2.500" /></svg>
        <Caret />
      </Tool>
      <Tool label="Text rotation" w="w-[36px]">
        <svg viewBox="0 0 16 16" className="h-[15px] w-[16px]" fill="none" stroke="currentColor" strokeWidth="1.600"><path d="M1 3l12-1L5 12zM4 15L15 5M11.500 5H15v3.500" /></svg>
        <Caret />
      </Tool>
      <Sep /><span className="w-[4px]" />
      <Tool label="Insert link"><MdLink className={ic} /></Tool>
      <Tool label="Insert comment"><MdAddComment className="h-[17px] w-[17px]" /></Tool>
      <Tool label="Insert chart"><MdInsertChartOutlined className="h-[19px] w-[19px]" /></Tool>
      <Tool label="Create a filter" w="w-[46px]">
        <svg viewBox="0 0 16 16" className="mr-[3px] h-[15px] w-[15px]" fill="none" stroke="currentColor" strokeWidth="1.600"><path d="M1.500 2.500h13L9.500 9v5h-3V9zM4 4h8" /></svg>
        <Caret />
      </Tool>
      <Tool label="Functions" w="w-[36px]"><MdFunctions className="h-[19px] w-[19px]" /><Caret /></Tool>
      <button aria-label="Hide the menus" className="mr-[7px] ml-auto"><MdKeyboardArrowUp className="h-[20px] w-[20px]" /></button>
    </div>
  );
}

const rows = [
  ["12 19:09:31", "7:57:54", "7:58:18"], ["12 19:11:49", "7:58:25", "7:58:49"], ["12 19:13:37", "7:58:56", "7:59:20"],
  ["12 19:19:07", "7:59:26", "7:59:51"], ["12 19:20:18", "7:59:57", "8:00:22"], ["12 19:21:18", "8:00:28", "8:00:53"],
  ["12 19:26:39", "8:00:59", "8:01:24"], ["12 19:28:33", "8:01:30", "8:01:55"], ["13 12:13:43", "4:42:01", "4:42:25"],
  ["13 12:13:51", "4:42:33", "4:42:58"], ["13 12:13:26", "4:43:04", "4:43:30"], ["13 12:13:28", "4:43:36", "4:44:01"],
  ["13 12:13:16", "4:44:07", "4:44:32"], ["13 12:14:00", "4:44:38", "4:45:02"], ["13 12:14:11", "4:45:09", "4:45:34"],
  ["13 12:14:13", "4:45:50", "4:46:17"], ["13 12:14:44", "4:46:24", "4:46:48"], ["13 12:13:10", "4:47:00", "4:47:24"],
  ["13 12:14:44", "4:47:31", "4:47:55"], ["13 12:13:10", "4:48:02", "4:48:26"], ["13 12:14:55", "4:48:33", "4:48:57"],
  ["13 16:47:49", "4:49:04", "4:49:29"], ["13 12:13:04", "4:49:35", "4:50:00"], ["13 12:15:04", "4:50:06", "4:50:31"],
  ["13 12:12:40", "4:50:38", "4:51:02"], ["13 12:12:21", "4:51:09", "4:51:33"], ["13 12:17:17", "5:09:24", "5:09:49"],
  ["13 17:08:44", "5:09:56", "5:10:20"], ["13 12:17:28", "5:10:27", "5:11:19"], ["13 12:17:50", "5:30:25", "5:30:50"],
  ["13 12:18:58", "5:42:05", "5:42:41"], ["13 12:19:04", "5:50:37", "5:51:02"], ["13 12:19:08", "5:51:09", "5:51:33"],
  ["13 12:19:17", "5:51:39", "5:52:04"], ["13 12:19:30", "5:52:10", "5:52:36"],
];

const letters = "ABCDEFGHIJKLMNOP".split("");
const colWidths = ["w-[207px]", "w-[122px]", "w-[123px]", "w-[114px]", "w-[199px]", "w-[130px]"];

function Grid() {
  const cell = "border-r border-b border-[#e1e1e1] pr-px pl-[3px] py-0 whitespace-nowrap";
  const num = "border-r border-b border-[#c0c0c0] p-0 text-center font-[Roboto] text-[10px] font-normal text-[#777]";
  return (
    <table className="w-full table-fixed border-separate border-spacing-0 bg-white font-[Liberation_Sans] text-[12px] leading-[17px] text-black">
      <colgroup>
        <col className="w-[40px]" />
        {colWidths.map((w, i) => <col key={i} className={w} />)}
        {letters.slice(6).map((l) => <col key={l} className="w-[91px]" />)}
        <col />
      </colgroup>
      <thead>
        <tr className="h-[22px]">
          <th className="border-r-4 border-b border-[#bdbdbd] bg-[#f8f9fa] p-0" />
          {letters.map((l) => (
            <th key={l} scope="col" className={cx("border-r border-b border-[#c0c0c0] p-0 font-[Roboto] text-[11px] font-normal text-[#5f6368]", l === "C" ? "bg-[#e8eaed]" : "bg-[#f8f9fa]")}>{l}</th>
          ))}
          <th className="border-b border-[#c0c0c0] bg-[#f8f9fa] p-0" />
        </tr>
      </thead>
      <tbody>
        <tr className="h-[18px]">
          <th scope="row" className={cx(num, "border-b-0 bg-[#f8f9fa]")}>1</th>
          {["Process ID", "Process Type", "Time Start", "Status", "BOT Remarks", "Time End"].map((t) => <td key={t} className={cx(cell, "border-b-0")}>{t}</td>)}
          {letters.slice(6).map((l) => <td key={l} className={cx(cell, "border-b-0")} />)}
          <td />
        </tr>
        <tr className="h-[5px]">
          <td className="bg-[#bdbdbd] p-0" />
          <td colSpan={17} className="bg-[#dadfe8] p-0" />
        </tr>
        {Array.from({ length: 43 }, (_, i) => {
          const r = rows[i];
          const picked = i === 30;
          return (
            <tr key={i} className={i === 42 ? "h-[15px] leading-[13px]" : "h-[19px]"}>
              <th scope="row" className={cx(num, picked ? "bg-[#e8eaed]" : "bg-[#f8f9fa]", i === 42 && "border-b-0")}>{57 + i}</th>
              <td className={cell}>{r && `Inventory Return (202007${r[0]})`}</td>
              <td className={cell}>{r && "ERP - RETURN"}</td>
              <td className={cx(cell, "text-right", picked && "relative outline-2 outline-[#1a73e8] -outline-offset-1")}>
                {r && `07/13/2020 ${r[1]}`}
                {picked && <span className="absolute -right-[3px] -bottom-[3px] h-[6px] w-[6px] border border-white bg-[#1a73e8]" />}
              </td>
              <td className={cell}>{r && "DONE"}</td>
              <td className={cell}>{r && "SUCCESS"}</td>
              <td className={cx(cell, "text-right")}>{r && `07/13/2020 ${r[2]}`}</td>
              {letters.slice(6).map((l) => <td key={l} className={cell} />)}
              <td className="border-b border-[#e1e1e1] p-0" />
            </tr>
          );
        })}
      </tbody>
    </table>
  );
}

function SidePanel() {
  return (
    <aside className="flex w-[50px] shrink-0 flex-col items-center border-t border-l border-[#dadce0] bg-white pt-[18px]">
      <button aria-label="Calendar" className="h-[14px]">
        <svg viewBox="0 0 16 16" className="h-[15px] w-[15px]">
          <rect x="0" y="0" width="16" height="4" fill="#bdc1c6" /><rect x="0" y="3" width="16" height="13" fill="#3f78e6" />
          <text x="2.500" y="13" fontSize="9" fill="#fff" fontFamily="Roboto">31</text>
        </svg>
      </button>
      <button aria-label="Keep" className="mt-[36px] h-[14px]">
        <svg viewBox="0 0 16 16" className="h-[15px] w-[15px]">
          <path d="M1 0h14a1 1 0 0 1 1 1v11l-4 4H1a1 1 0 0 1-1-1V1a1 1 0 0 1 1-1z" fill="#f6b704" />
          <path d="M6.300 10.500V9a3.200 3.200 0 1 1 3.400 0v1.500zM6.500 12.500h3" fill="none" stroke="#fff" strokeWidth="1.200" />
        </svg>
      </button>
      <button aria-label="Tasks" className="mt-[35px] h-[17px]">
        <svg viewBox="0 0 18 18" className="h-[17px] w-[17px]">
          <circle cx="9" cy="9" r="9" fill="#4285f4" /><path d="M5 9l3 3" stroke="#fbbc04" strokeWidth="2.600" /><path d="M7 12l6-7" stroke="#fff" strokeWidth="2.400" />
        </svg>
      </button>
      <button aria-label="Show side panel" className="mt-auto mb-[17px]"><MdKeyboardArrowRight className="h-[17px] w-[17px] text-[#5f6368]" /></button>
    </aside>
  );
}

function SheetTabs() {
  return (
    <div className="flex h-[36px] shrink-0 items-stretch border-y border-[#e4e4ea] bg-[#f1f3f4] pl-[42px] font-[Roboto] text-[#5f6368]">
      <button aria-label="Add sheet"><MdAdd className="h-[16px] w-[16px]" /></button>
      <button aria-label="All sheets" className="ml-[12px]"><MdMenu className="h-[16px] w-[16px]" /></button>
      <button className="ml-[19px] flex w-[87px] items-center justify-center gap-[4px] border-x border-[#dadce0] bg-white text-[12px] font-bold text-[#188038]">
        Sheet1<MdArrowDropDown className="h-[14px] w-[14px]" />
      </button>
      <div className="flex-1" />
      <button className="flex w-[94px] items-center gap-[10px] bg-white pl-[11px] text-[12px] text-[#188038]">
        <svg viewBox="0 0 18 19" className="h-[19px] w-[18px]">
          <path d="M1 0h16v15h-5l-3 4-3-4H1z" fill="#0f9d58" /><path d="M9 3l1.400 3.600L14 8l-3.600 1.400L9 13 7.600 9.400 4 8l3.600-1.400z" fill="#fff" />
        </svg>
        Explore
      </button>
    </div>
  );
}

function SpreadsheetWindow() {
  return (
    <section className="flex min-w-0 flex-1 flex-col bg-white">
      <IeBar />
      <SheetsHeader />
      <div className="flex flex-1">
        <div className="flex min-w-0 flex-1 flex-col">
          <SheetsToolbar />
          <div className="flex h-[22px] shrink-0 items-center border-b border-[#c0c0c0] font-[Liberation_Sans] text-[12px] text-black">
            <label htmlFor="fx" className="w-[40px] border-r border-[#c0c0c0] text-center font-[Liberation_Serif] text-[16px] leading-4 text-[#b5b5b5] italic">fx</label>
            <input id="fx" defaultValue="7/13/2020 5:42:05" className="ml-[10px] flex-1 outline-none" />
          </div>
          <div className="flex">
            <div className="min-w-0 flex-1">
              <Grid />
            </div>
            <div className="flex w-[15px] shrink-0 flex-col items-center border-l border-[#dadce0] bg-[#f1f1f1]">
              <div className="h-[40px] w-full bg-[#f8f9fa]" />
              <div className="h-[5px] w-full bg-[#dadfe8]" />
              <MdKeyboardArrowUp className="mt-[9px] h-[18px] w-[14px] shrink-0 text-[#5f6368]" />
              <div className="mt-[44px] h-[31px] w-full bg-[#cdcdcd]" />
              <MdKeyboardArrowDown className="mt-auto mb-[12px] h-[18px] w-[14px] shrink-0 text-[#5f6368]" />
            </div>
          </div>
          <div className="flex h-[15px] shrink-0 items-center bg-[#f0f0f0] text-[#5f6368]">
            <span className="h-full w-[40px] bg-[#f8f9fa]" />
            <MdKeyboardArrowLeft className="ml-[10px] h-[18px] w-[18px]" />
            <span className="ml-[4px] h-[14px] w-7/12 bg-[#cccccc]" />
            <MdKeyboardArrowRight className="mr-[26px] ml-auto h-[18px] w-[18px]" />
          </div>
          <SheetTabs />
        </div>
        <SidePanel />
      </div>
    </section>
  );
}

export default function App() {
  return (
    <div className="flex min-h-screen w-full overflow-hidden font-['Open_Sans','Noto_Sans',sans-serif]">
      <section className="relative flex w-1/2 shrink-0 flex-col">
        <ChromeTitleBar />
        <ChromeToolbar />
        <BookmarksBar />
        <RestorePopup />
        <ContactCenter />
        <SiteFooter />
        <Taskbar />
      </section>
      <SpreadsheetWindow />
    </div>
  );
}
